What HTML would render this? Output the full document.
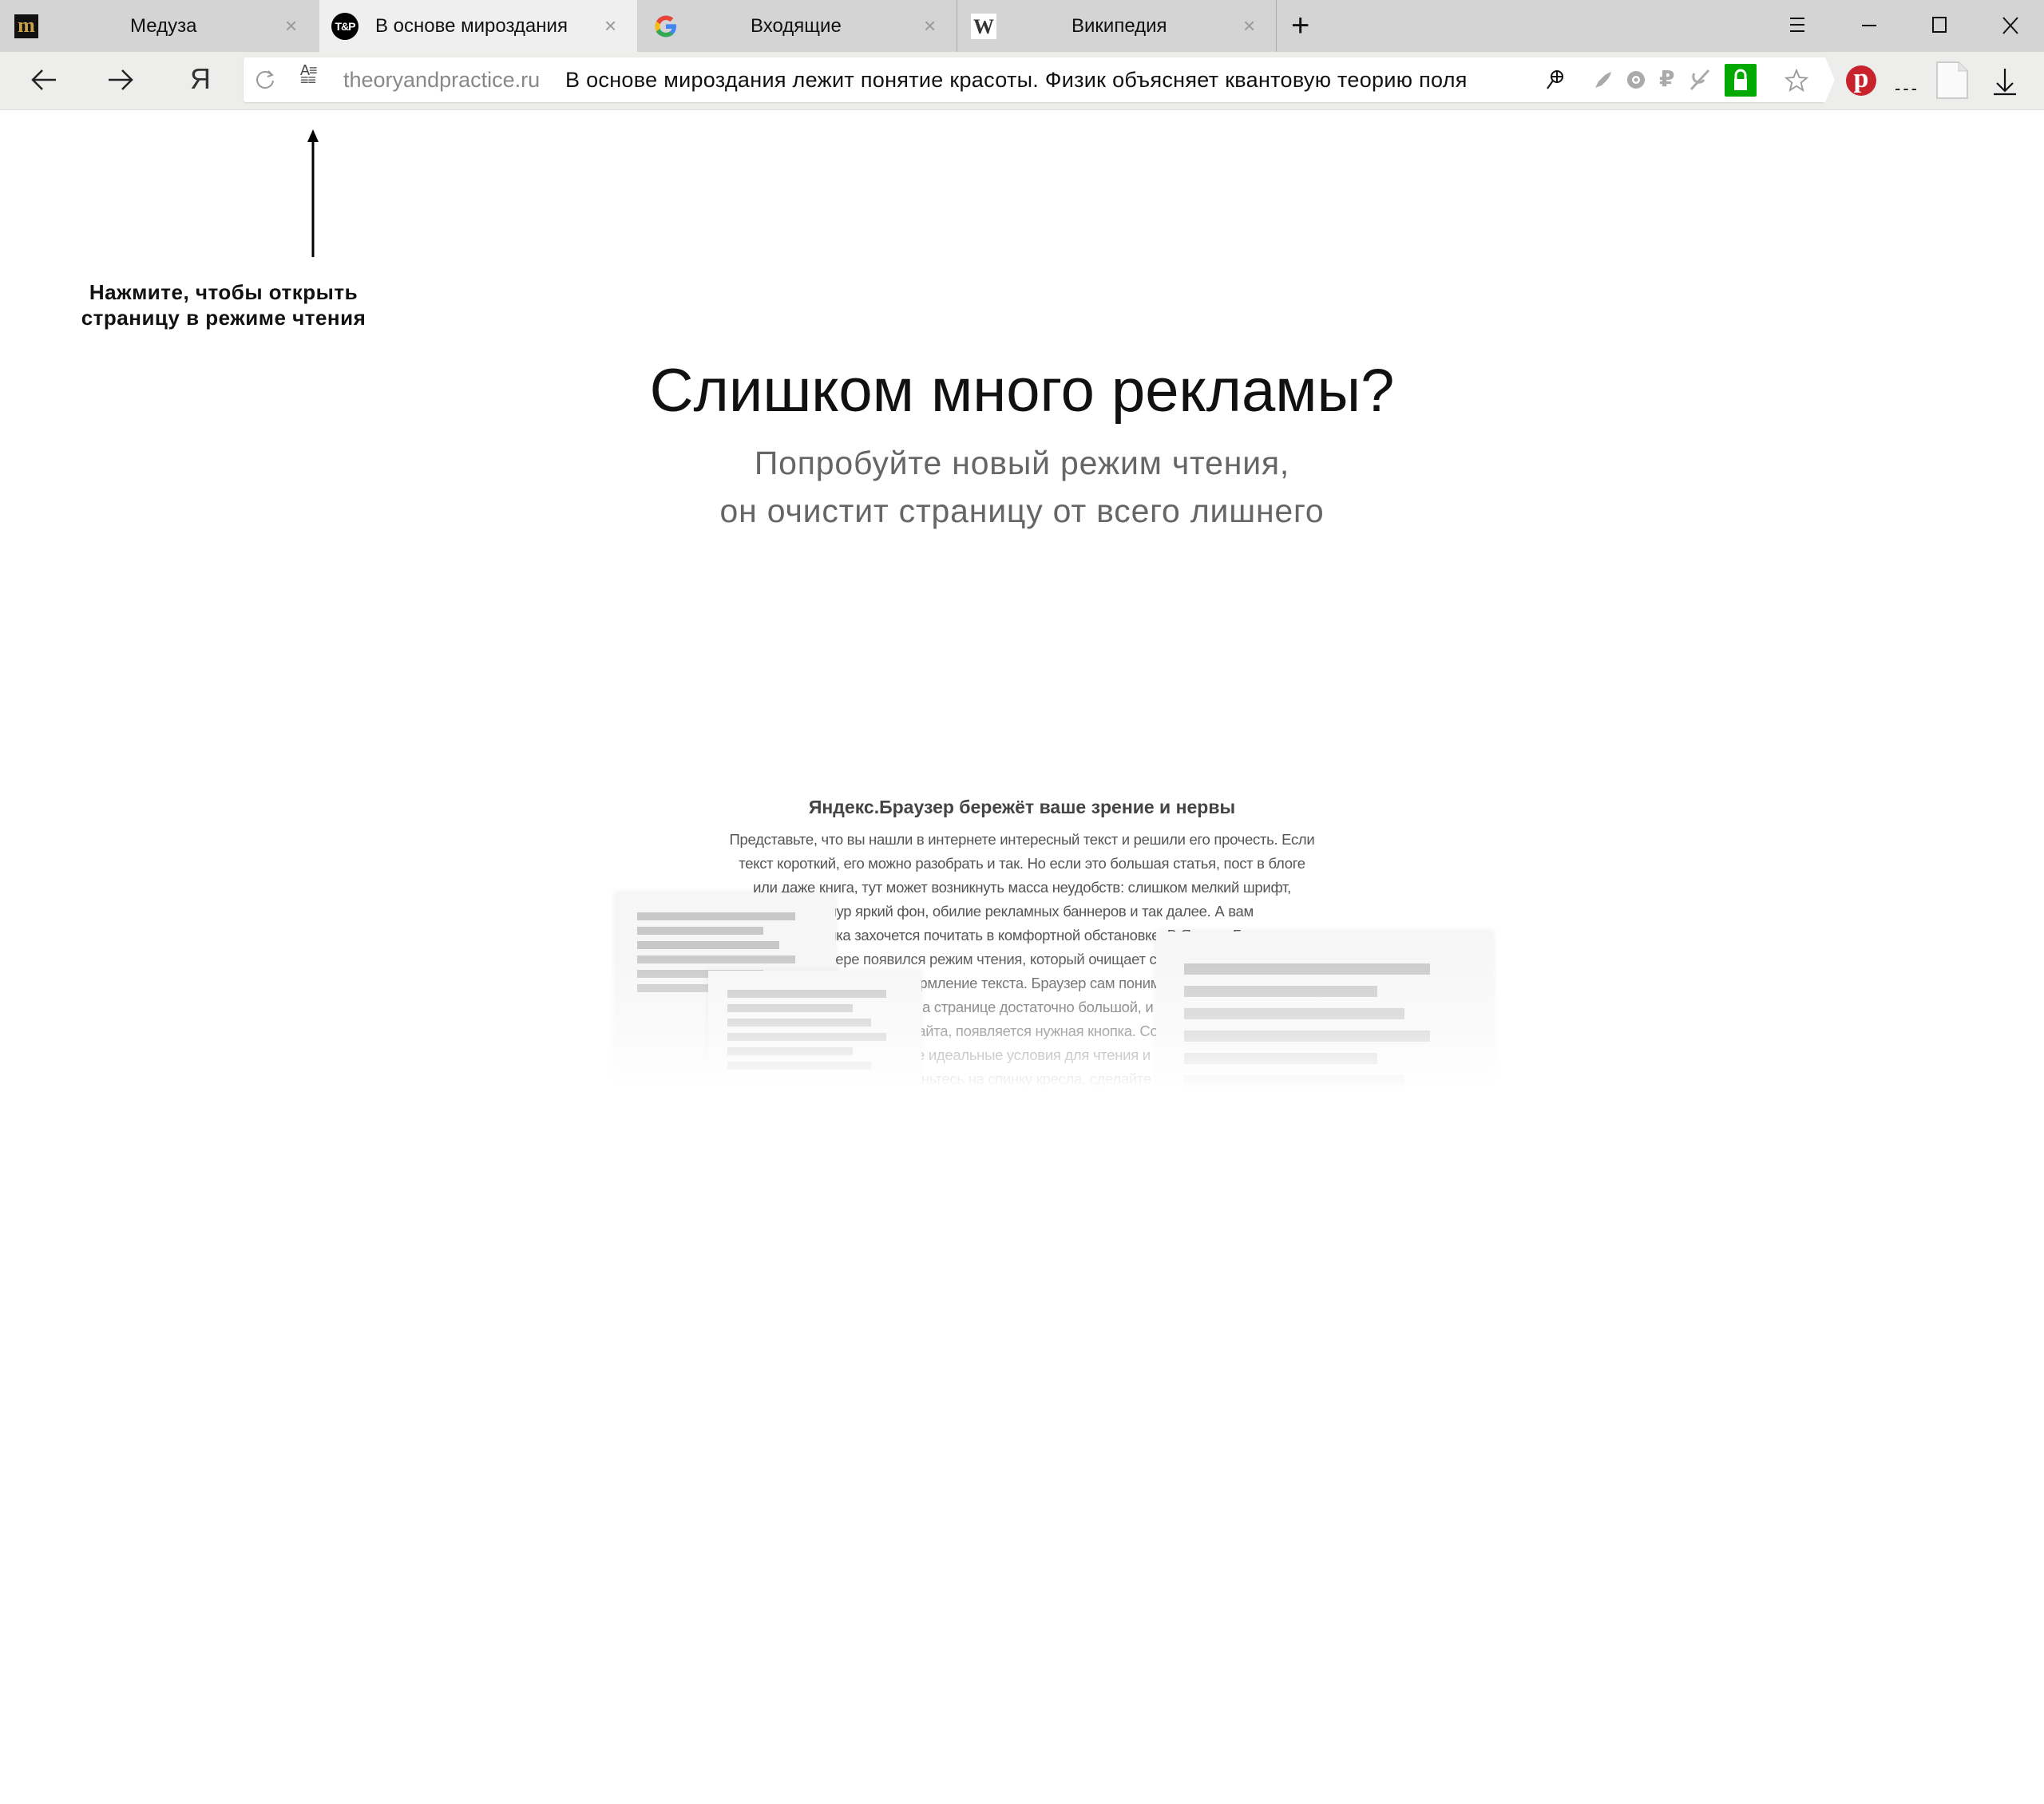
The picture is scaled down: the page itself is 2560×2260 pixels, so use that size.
<!DOCTYPE html>
<html><head><meta charset="utf-8">
<style>
*{margin:0;padding:0;box-sizing:border-box}
body{width:2560px;height:2260px;background:#fff;position:relative;overflow:hidden;font-family:"Liberation Sans","DejaVu Sans",sans-serif;color:#111}
.a{position:absolute}
.tabbar{left:0;top:0;width:2560px;height:65px;background:#d4d4d4}
.tab{top:0;height:65px;font-size:24px;line-height:65px;color:#111}
.x{color:#999;font-size:26px;top:0;line-height:65px}
.tb{left:0;top:65px;width:2560px;height:73px;background:#ededec;border-bottom:1px solid #ddd}
.addr{left:305px;top:72px;width:1980px;height:56px;background:#fff;border-radius:3px;box-shadow:0 1px 2px rgba(0,0,0,.12)}
.line{position:absolute;background:#c8c8c8}
.body{left:760px;top:1037px;width:1040px;text-align:center;font-size:18.5px;line-height:30px;color:#555;letter-spacing:-0.3px;white-space:nowrap}
</style></head><body>
<div class="a tabbar"></div>
<div class="a" style="left:18px;top:18px;width:30px;height:30px;background:#111;color:#c9a24a;font:bold 26px/28px 'Liberation Serif',serif;text-align:center">m</div>
<div class="a tab" style="left:163px">Медуза</div>
<div class="a x" style="left:357px">×</div>
<div class="a" style="left:400px;top:0;width:398px;height:65px;background:#efefef"></div>
<div class="a" style="left:415px;top:16px;width:34px;height:34px;border-radius:50%;background:#000;color:#fff;font:bold 14px/34px 'Liberation Sans',sans-serif;text-align:center;letter-spacing:-1px">T&amp;P</div>
<div class="a tab" style="left:470px">В основе мироздания</div>
<div class="a x" style="left:757px">×</div>
<svg class="a" style="left:818px;top:17px" width="32" height="32" viewBox="0 0 48 48"><path d="M43.6 20H24v8.5h11.3C34 33 29.7 36 24 36c-6.6 0-12-5.4-12-12s5.4-12 12-12c3 0 5.8 1.1 7.9 3l6-6C34.3 5.8 29.4 4 24 4 13 4 4 13 4 24s9 20 20 20 19.5-8 19.5-20c0-1.3-.1-2.7-.4-4z" fill="#4285f4"/><path d="M6.3 14.7l7 5.1C15.2 15.2 19.3 12 24 12c3 0 5.8 1.1 7.9 3l6-6C34.3 5.8 29.4 4 24 4 16.3 4 9.7 8.3 6.3 14.7z" fill="#ea4335"/><path d="M24 44c5.2 0 10-1.8 13.6-5l-6.5-5.5C29.1 35.1 26.7 36 24 36c-5.6 0-9.9-3.1-11.300-7.5l-7 5.4C9.2 40 16 44 24 44z" fill="#34a853"/><path d="M6.3 14.7C4.8 17.5 4 20.7 4 24s.8 6.5 2.2 9.3l7-5.4c-.5-1.2-.7-2.5-.7-3.900s.3-2.7.7-3.900z" fill="#fbbc05"/></svg>
<div class="a tab" style="left:940px">Входящие</div>
<div class="a x" style="left:1157px">×</div>
<div class="a" style="left:1198px;top:0;width:1px;height:65px;background:#aaa"></div>
<div class="a" style="left:1216px;top:17px;width:32px;height:32px;background:#fff;font:bold 26px/34px 'Liberation Serif',serif;text-align:center;color:#333">W</div>
<div class="a tab" style="left:1342px">Википедия</div>
<div class="a x" style="left:1557px">×</div>
<div class="a" style="left:1598px;top:0;width:1px;height:65px;background:#aaa"></div>
<div class="a" style="left:1617px;top:12px;font-size:40px;line-height:40px;font-weight:300">+</div>
<svg class="a" style="left:2240px;top:20px" width="24" height="24"><path d="M2 3h18M2 11h18M2 19h18" stroke="#111" stroke-width="2"/></svg>
<svg class="a" style="left:2330px;top:20px" width="24" height="24"><path d="M2 12h18" stroke="#111" stroke-width="2"/></svg>
<svg class="a" style="left:2418px;top:20px" width="24" height="24"><rect x="3" y="2" width="16" height="18" fill="none" stroke="#111" stroke-width="2"/></svg>
<svg class="a" style="left:2506px;top:20px" width="24" height="24"><path d="M3 2l18 20M21 2L3 22" stroke="#111" stroke-width="2"/></svg>
<div class="a tb"></div>
<svg class="a" style="left:38px;top:85px" width="34" height="30"><path d="M32 15H3M15 3L3 15l12 12" fill="none" stroke="#222" stroke-width="2.5"/></svg>
<svg class="a" style="left:134px;top:85px" width="34" height="30"><path d="M2 15h29M19 3l12 12-12 12" fill="none" stroke="#222" stroke-width="2.5"/></svg>
<div class="a" style="left:238px;top:78px;font-size:36px;color:#333;font-weight:300">Я</div>
<div class="a addr"></div>
<svg class="a" style="left:2280px;top:72px" width="20" height="56"><path d="M0 0h6l12 28-12 28H0z" fill="#fff"/></svg>
<svg class="a" style="left:318px;top:85px" width="28" height="30"><path d="M22 9A10 10 0 1 0 24 16" fill="none" stroke="#999" stroke-width="2"/><path d="M18 4l5 5-6 2" fill="none" stroke="#999" stroke-width="2"/></svg>
<div class="a" style="left:376px;top:82px;font-size:18px;line-height:12px;color:#444;letter-spacing:-1px">A≡<br>≡≡</div>
<div class="a" style="left:430px;top:82px;font-size:27px;line-height:36px;color:#888">theoryandpractice.ru</div>
<div class="a" style="left:708px;top:82px;font-size:27px;line-height:36px;color:#111;letter-spacing:0.3px">В основе мироздания лежит понятие красоты. Физик объясняет квантовую теорию поля</div>
<svg class="a" style="left:1936px;top:86px" width="24" height="28"><circle cx="14" cy="10" r="7" fill="none" stroke="#111" stroke-width="2"/><path d="M14 3v14M7 10h14M9 15l-7 10" stroke="#111" stroke-width="2"/></svg>
<svg class="a" style="left:1996px;top:88px" width="24" height="24"><path d="M2 22l4-8 6-6c4-4 8-5 10-6-1 3-2 7-6 11l-6 6z" fill="#aaa"/></svg>
<svg class="a" style="left:2036px;top:88px" width="26" height="26"><circle cx="13" cy="12" r="11" fill="#aaa"/><circle cx="13" cy="12" r="5" fill="#fff"/><circle cx="13" cy="12" r="2.5" fill="#aaa"/></svg>
<div class="a" style="left:2078px;top:82px;font-size:28px;font-weight:bold;color:#aaa">₽</div>
<svg class="a" style="left:2116px;top:86px" width="26" height="28"><path d="M2 26L24 2M6 6a6 6 0 0 0 12 8" fill="none" stroke="#aaa" stroke-width="3"/></svg>
<div class="a" style="left:2160px;top:80px;width:40px;height:41px;background:#00a800;border-radius:2px"></div>
<svg class="a" style="left:2160px;top:80px" width="40" height="41"><path d="M14 20v-6a6 6 0 0 1 12 0v6" fill="none" stroke="#fff" stroke-width="3"/><rect x="12" y="19" width="16" height="14" fill="#fff"/></svg>
<svg class="a" style="left:2235px;top:86px" width="30" height="30"><path d="M15 2l3.6 9 9.4.6-7.3 6 2.4 9.4L15 21.8 6.9 27l2.4-9.4L2 11.6l9.4-.6z" fill="none" stroke="#999" stroke-width="1.8"/></svg>
<div class="a" style="left:2312px;top:82px;width:38px;height:38px;border-radius:50%;background:#c8232c"></div>
<div class="a" style="left:2312px;top:78px;width:38px;text-align:center;font:bold 34px/42px 'Liberation Serif',serif;color:#fff">p</div>
<div class="a" style="left:2373px;top:98px;font-size:22px;letter-spacing:3px;color:#111">---</div>
<svg class="a" style="left:2424px;top:76px" width="42" height="50"><path d="M2 2h27l11 11v34H2z" fill="#fafafa" stroke="#ccc" stroke-width="2"/><path d="M29 2v11h11" fill="#e6e6e6" stroke="#ccc"/></svg>
<svg class="a" style="left:2495px;top:84px" width="32" height="36"><path d="M16 2v28M6 20l10 10 10-10M2 34h28" fill="none" stroke="#111" stroke-width="2.2"/></svg>
<svg class="a" style="left:382px;top:160px" width="20" height="162"><path d="M10 14v148" stroke="#000" stroke-width="3"/><path d="M10 2l7 16H3z" fill="#000"/></svg>
<div class="a" style="left:40px;top:350px;width:480px;text-align:center;font-size:26px;line-height:32px;font-weight:bold;color:#111;letter-spacing:0.5px">Нажмите, чтобы открыть<br>страницу в режиме чтения</div>
<div class="a" style="left:0;top:440px;width:2560px;text-align:center;font-size:76px;line-height:100px;color:#111">Слишком много рекламы?</div>
<div class="a" style="left:0;top:550px;width:2560px;text-align:center;font-size:41px;line-height:60px;color:#666;letter-spacing:0.8px">Попробуйте новый режим чтения,<br>он очистит страницу от всего лишнего</div>
<div class="a" style="left:700px;top:998px;width:1160px;text-align:center;font-size:23px;font-weight:bold;color:#444">Яндекс.Браузер бережёт ваше зрение и нервы</div>
<div class="a body">Представьте, что вы нашли в интернете интересный текст и решили его прочесть. Если<br>текст короткий, его можно разобрать и так. Но если это большая статья, пост в блоге<br>или даже книга, тут может возникнуть масса неудобств: слишком мелкий шрифт,<br>чересчур яркий фон, обилие рекламных баннеров и так далее. А вам<br>наверняка захочется почитать в комфортной обстановке. В Яндекс.Бра-<br>узере появился режим чтения, который очищает страницу и<br>улучшает оформление текста. Браузер сам понимает, если<br>если текст на странице достаточно большой, и справа<br>от адреса сайта, появляется нужная кнопка. Создайте<br>себе идеальные условия для чтения и<br>откиньтесь на спинку кресла, сделайте</div>
<div class="a" style="left:771px;top:1118px;width:275px;height:240px;background:#f6f6f6;box-shadow:0 0 8px rgba(0,0,0,.08)">
 <div class="line" style="left:27px;top:25px;width:198px;height:10px"></div>
 <div class="line" style="left:27px;top:43px;width:158px;height:10px"></div>
 <div class="line" style="left:27px;top:61px;width:178px;height:10px"></div>
 <div class="line" style="left:27px;top:79px;width:198px;height:10px"></div>
 <div class="line" style="left:27px;top:97px;width:158px;height:10px"></div>
 <div class="line" style="left:27px;top:115px;width:178px;height:10px"></div>
</div>
<div class="a" style="left:887px;top:1216px;width:267px;height:150px;background:#f6f6f6;box-shadow:0 0 8px rgba(0,0,0,.08)">
 <div class="line" style="left:24px;top:24px;width:199px;height:10px"></div>
 <div class="line" style="left:24px;top:42px;width:157px;height:10px"></div>
 <div class="line" style="left:24px;top:60px;width:180px;height:10px"></div>
 <div class="line" style="left:24px;top:78px;width:199px;height:10px"></div>
 <div class="line" style="left:24px;top:96px;width:157px;height:10px"></div>
 <div class="line" style="left:24px;top:114px;width:180px;height:10px"></div>
</div>
<div class="a" style="left:1448px;top:1167px;width:422px;height:200px;background:#f6f6f6;box-shadow:0 0 8px rgba(0,0,0,.08)">
 <div class="line" style="left:35px;top:40px;width:308px;height:14px"></div>
 <div class="line" style="left:35px;top:68px;width:242px;height:14px"></div>
 <div class="line" style="left:35px;top:96px;width:276px;height:14px"></div>
 <div class="line" style="left:35px;top:124px;width:308px;height:14px"></div>
 <div class="line" style="left:35px;top:152px;width:242px;height:14px"></div>
 <div class="line" style="left:35px;top:180px;width:276px;height:14px"></div>
</div>
<div class="a" style="left:740px;top:1190px;width:1160px;height:190px;background:linear-gradient(to bottom,rgba(255,255,255,0),rgba(255,255,255,.5) 55%,#fff 92%)"></div>
</body></html>
